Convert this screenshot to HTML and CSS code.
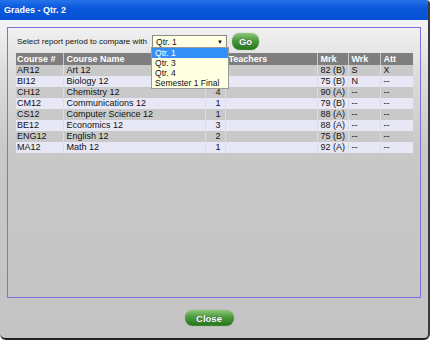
FILE: index.html
```html
<!DOCTYPE html>
<html lang="en">
<head>
  <meta charset="UTF-8">
  <title>Grades - Qtr. 2</title>
  <link rel="stylesheet" href="styles.css">
</head>
<body>
  <div class="dialog">
    <div class="titlebar">Grades - Qtr. 2</div>
    <div class="content">
      <div class="panel">
        <div class="compare">
          <span class="label">Select report period to compare with</span>
          <div class="select">
            <span>Qtr. 1</span><span class="arrow">&#9660;</span>
            <ul class="options">
              <li class="selected">Qtr. 1</li>
              <li>Qtr. 3</li>
              <li>Qtr. 4</li>
              <li>Semester 1 Final</li>
            </ul>
          </div>
          <button class="btn go">Go</button>
        </div>

        <table class="grades">
          <colgroup>
            <col style="width:47px"><col style="width:142px"><col style="width:20px"><col style="width:92px">
            <col style="width:31px"><col style="width:32px"><col style="width:33px">
          </colgroup>
          <tr>
            <th>Course #</th><th>Course Name</th><th></th><th>Teachers</th><th>Mrk</th><th>Wrk</th><th>Att</th>
          </tr>
          <tr><td>AR12</td><td>Art 12</td><td class="num"></td><td></td><td>82 (B)</td><td>S</td><td>X</td></tr>
          <tr><td>BI12</td><td>Biology 12</td><td class="num"></td><td></td><td>75 (B)</td><td>N</td><td>--</td></tr>
          <tr><td>CH12</td><td>Chemistry 12</td><td class="num">4</td><td></td><td>90 (A)</td><td>--</td><td>--</td></tr>
          <tr><td>CM12</td><td>Communications 12</td><td class="num">1</td><td></td><td>79 (B)</td><td>--</td><td>--</td></tr>
          <tr><td>CS12</td><td>Computer Science 12</td><td class="num">1</td><td></td><td>88 (A)</td><td>--</td><td>--</td></tr>
          <tr><td>BE12</td><td>Economics 12</td><td class="num">3</td><td></td><td>88 (A)</td><td>--</td><td>--</td></tr>
          <tr><td>ENG12</td><td>English 12</td><td class="num">2</td><td></td><td>75 (B)</td><td>--</td><td>--</td></tr>
          <tr><td>MA12</td><td>Math 12</td><td class="num">1</td><td></td><td>92 (A)</td><td>--</td><td>--</td></tr>
        </table>
      </div>

      <div class="footer">
        <button class="btn close">Close</button>
      </div>
    </div>
  </div>
</body>
</html>
```

FILE: styles.css
```css
body {
  margin: 0;
  font-family: "Liberation Sans", Arial, sans-serif;
  font-size: 9px;
  color: #111;
  background: #fff;
}
.dialog {
  width: 428px;
  height: 338px;
  display: flex;
  flex-direction: column;
  border-right: 2px solid #3a3a3a;
  border-bottom: 2px solid #222;
  border-radius: 0 4px 6px 6px;
  overflow: hidden;
  background: linear-gradient(#f4f4f4 20px, #dedede 70px, #c8c8c8 150px, #c4c4c4);
}
.titlebar {
  height: 20px;
  line-height: 20px;
  padding-left: 4px;
  color: #fff;
  font-weight: bold;
  font-size: 9px;
  background: linear-gradient(#2673ea, #0b58da 40%, #0652d4);
}
.content {
  flex: 1;
  display: flex;
  flex-direction: column;
  padding: 7px 0 0 7px;
}
.panel {
  width: 414px;
  height: 271px;
  border: 1px solid #7b74dc;
  padding: 5px 7px 0 8px;
  box-sizing: border-box;
}
.compare {
  display: flex;
  align-items: center;
  height: 17px;
  gap: 5px;
  margin-bottom: 3px;
}
.label {
  margin-left: 1px;
  font-size: 8.1px;
}
.select {
  position: relative;
  width: 75px;
  height: 13px;
  box-sizing: border-box;
  border: 1px solid #8a8a8a;
  background: #ffffe2;
  display: flex;
  align-items: center;
  justify-content: space-between;
  padding: 0 3px 0 3px;
  font-size: 8.5px;
}
.arrow {
  font-size: 6px;
}
.options {
  position: absolute;
  left: -2px;
  top: 11px;
  width: 76px;
  margin: 0;
  padding: 0;
  list-style: none;
  background: #ffffe2;
  border: 1px solid #9a9a9a;
  z-index: 2;
}
.options li {
  height: 10px;
  line-height: 10px;
  padding-left: 3px;
}
.options .selected {
  background: #3390f8;
  color: #fff;
}
.btn {
  border: none;
  color: #fff;
  font-family: "Liberation Sans", Arial, sans-serif;
  font-weight: bold;
  font-size: 9.5px;
  border-radius: 8px;
  padding: 0;
  background: linear-gradient(#8cc87a, #4c9a3a 45%, #2a7a20 90%, #3c8c30);
  box-shadow: 0 0 1px #6a8a60;
  text-shadow: 0 0 1px #235;
}
.go {
  width: 27px;
  height: 17px;
}
.grades {
  border-collapse: collapse;
  table-layout: fixed;
  width: 397px;
}
.grades th, .grades td {
  height: 11px;
  padding: 0 0 0 3px;
  line-height: 11px;
  text-align: left;
  white-space: nowrap;
  overflow: hidden;
  border-left: 1px solid #dcdce6;
}
.grades tr > :first-child {
  border-left: none;
  padding-left: 1px;
}
.grades th {
  height: 12px;
  background: #7e7e7e;
  color: #fff;
  font-weight: bold;
  border-left-color: #c8c8c8;
}
.grades tr:nth-child(odd) td {
  background: #e7e7f5;
}
.grades tr:nth-child(even) td {
  background: #c9c9c9;
}
.grades td.num {
  text-align: right;
  padding: 0 4px 0 0;
}
.footer {
  flex: 1;
  display: flex;
  justify-content: center;
  align-items: flex-start;
  padding: 12px 17px 0 0;
}
.close {
  width: 49px;
  height: 16px;
}
```
